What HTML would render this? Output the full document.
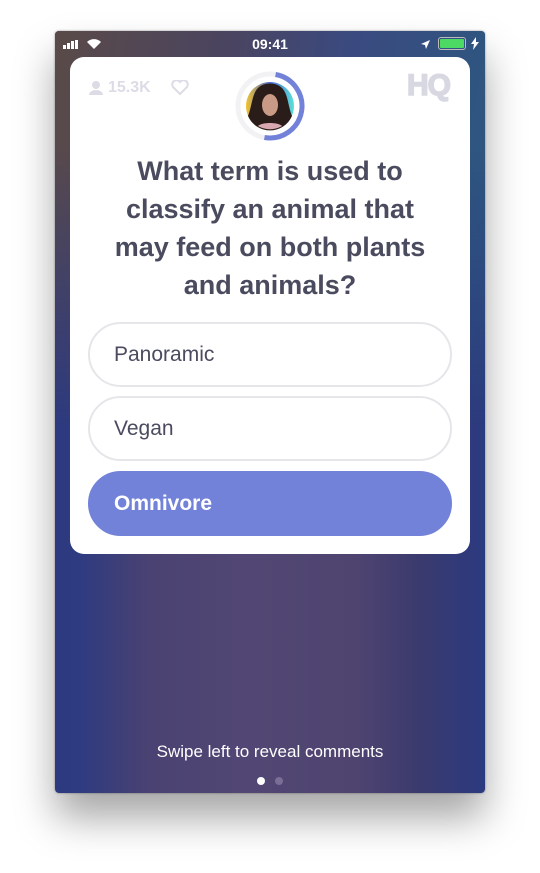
<!DOCTYPE html>
<html><head><style>
*{margin:0;padding:0;box-sizing:border-box}
body{width:540px;height:873px;background:#fff;position:relative;overflow:hidden;font-family:"Liberation Sans",sans-serif}
.phone{position:absolute;left:55px;top:31px;width:430px;height:762px;border-radius:4px;overflow:hidden;
background:linear-gradient(90deg,#2c3a80 0%,#2f3b80 6%,#4a4272 22%,#524774 45%,#4f4470 70%,#3a3a6e 85%,#2b3a80 100%);
box-shadow:0 25px 40px rgba(0,0,0,.35),0 0 2px rgba(0,0,0,.4)}
.top{position:absolute;left:0;top:0;width:430px;height:400px;background:linear-gradient(100deg,#5a4a48 0%,#4a4460 35%,#3a4a80 60%,#2a5a80 100%);
-webkit-mask-image:linear-gradient(180deg,#000 0%,#000 30%,transparent 100%);mask-image:linear-gradient(180deg,#000 0%,#000 30%,transparent 100%)}
.status{position:absolute;top:0;left:0;width:430px;height:26px;color:#fff;font-size:14px;font-weight:bold}
.card{position:absolute;left:15px;top:26px;width:400px;height:497px;background:#fff;border-radius:14px}
.q{position:absolute;top:95px;left:0;width:400px;text-align:center;font-weight:bold;font-size:27px;line-height:38px;color:#4a4b5e}
.ans{position:absolute;left:18px;width:364px;height:65px;border:2px solid #e6e6ea;border-radius:33px;font-size:21px;color:#4a4b5e;padding-left:24px;line-height:61px}
.sel{background:#7282d9;border-color:#7282d9;color:#fff;font-weight:bold}
.swipe{position:absolute;top:711px;width:430px;text-align:center;color:#fff;font-size:17px}
</style></head><body>
<div class="phone">
<div class="top"></div>
<div class="status">
 <div style="position:absolute;left:8px;top:9px;display:flex;align-items:flex-end;gap:1px">
  <div style="width:3px;height:4px;background:#fff"></div><div style="width:3px;height:6px;background:#fff"></div><div style="width:3px;height:8px;background:#fff"></div><div style="width:3px;height:9px;background:#fff"></div></div>
 <svg style="position:absolute;left:31px;top:7px" width="16" height="12" viewBox="0 0 16 12"><path d="M8 11L1 4a10 10 0 0 1 14 0z" fill="#fff"/></svg>
 <div style="position:absolute;left:0;width:430px;text-align:center;top:5px">09:41</div>
 <svg style="position:absolute;left:365px;top:8px" width="11" height="11" viewBox="0 0 11 11"><path d="M10 1L1 5l4 1 1 4z" fill="#fff"/></svg>
 <div style="position:absolute;left:383px;top:6px;width:28px;height:13px;border:1px solid #bbb;border-radius:3px;padding:1px"><div style="width:100%;height:100%;background:#4cd964;border-radius:1px"></div></div>
 <svg style="position:absolute;left:416px;top:6px" width="8" height="13" viewBox="0 0 8 13"><path d="M5 0L0 7h3l-1 6 6-8H5z" fill="#fff"/></svg>
</div>
<div class="card">
 <svg style="position:absolute;left:18px;top:23px" width="16" height="16" viewBox="0 0 16 16"><circle cx="8" cy="5" r="4" fill="#dcdce6"/><path d="M1 15a7 5 0 0 1 14 0z" fill="#dcdce6"/></svg>
 <div style="position:absolute;left:38px;top:22px;font-size:16px;font-weight:bold;color:#dcdce6">15.3K</div>
 <svg style="position:absolute;left:101px;top:23px" width="18" height="16" viewBox="0 0 18 16"><path d="M9 14L2 7a4 4 0 0 1 7-5 4 4 0 0 1 7 5z" fill="none" stroke="#dcdce6" stroke-width="2"/></svg>
 <svg style="position:absolute;left:164px;top:13px" width="72" height="72" viewBox="0 0 72 72">
  <circle cx="36" cy="36" r="32" fill="none" stroke="#f2f2f4" stroke-width="5"/>
  <path d="M36 4a32 32 0 0 1 0 64" fill="none" stroke="#7282d9" stroke-width="5" transform="rotate(10 36 36)"/>
  <defs><linearGradient id="g" x1="0" y1="0" x2="1" y2="0"><stop offset="0" stop-color="#f2c230"/><stop offset=".5" stop-color="#4a6ad0"/><stop offset="1" stop-color="#5ce0d8"/></linearGradient></defs>
  <circle cx="36" cy="36" r="24" fill="url(#g)"/>
  <path d="M14 46a24 24 0 0 0 44 0c-4-10-4-22-10-28-6-6-18-6-24 0-6 6-6 18-10 28z" fill="#2a1c18"/>
  <ellipse cx="36" cy="35" rx="8" ry="11" fill="#c99a86"/>
  <path d="M24 56a24 24 0 0 0 24 0c-4-4-20-4-24 0z" fill="#d9a8b0"/>
 </svg>
 <div style="position:absolute;right:20px;top:12px;font-size:30px;font-weight:bold;color:#d8d8e2;letter-spacing:-1px;-webkit-text-stroke:1.5px #d8d8e2">HQ</div>
 <div class="q">What term is used to<br>classify an animal that<br>may feed on both plants<br>and animals?</div>
 <div class="ans" style="top:265px">Panoramic</div>
 <div class="ans" style="top:339px">Vegan</div>
 <div class="ans sel" style="top:414px">Omnivore</div>
</div>
<div class="swipe">Swipe left to reveal comments</div>
<div style="position:absolute;left:202px;top:746px;width:8px;height:8px;border-radius:50%;background:#fff"></div>
<div style="position:absolute;left:220px;top:746px;width:8px;height:8px;border-radius:50%;background:#7a6e96"></div>
</div>
</body></html>
